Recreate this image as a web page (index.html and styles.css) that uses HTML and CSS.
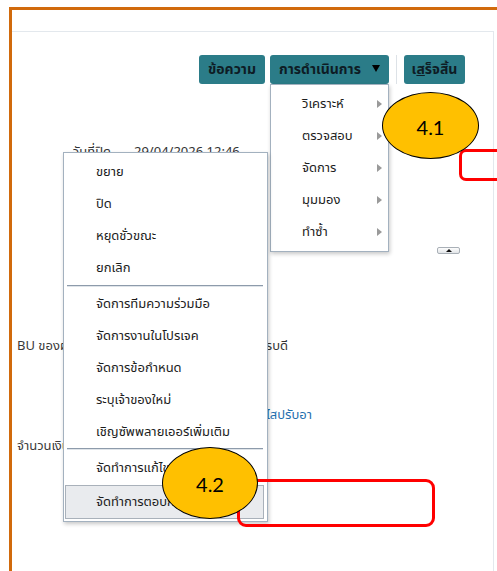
FILE: index.html
```html
<!DOCTYPE html>
<html lang="th">
<head>
<meta charset="utf-8">
<title>การดำเนินการ</title>
<link rel="stylesheet" href="styles.css">
</head>
<body>
<div class="frame">
  <div class="panel">
    <div class="toolbar">
      <button class="btn btn-msg">ข้อความ</button>
      <button class="btn btn-actions">การดำเนินการ <span class="caret"></span></button>
      <span class="tb-sep"></span>
      <button class="btn btn-done">เ<u>ส</u>ร็จสิ้น</button>
    </div>
    <div class="form">
      <div class="row row-close"><span class="label">วันที่ปิด</span><span class="value">29/04/2026 12:46</span></div>
      <div class="row-tools"><span class="mini-btn"><span class="mini-up"></span></span></div>
      <div class="row row-bu"><span class="label">BU ของผู้ร้องขอซื้อ</span><span class="value value-bu">บริษัท ครบดี</span></div>
      <div class="row row-link"><span class="label"></span><a class="value value-link">ไสปรับอา</a></div>
      <div class="row row-amount"><span class="label">จำนวนเงินรวมทั้งหมด</span></div>
    </div>
  </div>
</div>

<div class="menu menu-actions">
  <div class="mi">วิเคราะห์<span class="sub-arrow"></span></div>
  <div class="mi">ตรวจสอบ<span class="sub-arrow"></span></div>
  <div class="mi">จัดการ<span class="sub-arrow"></span></div>
  <div class="mi">มุมมอง<span class="sub-arrow"></span></div>
  <div class="mi">ทำซ้ำ<span class="sub-arrow"></span></div>
</div>

<div class="menu menu-sub">
  <div class="mi">ขยาย</div>
  <div class="mi">ปิด</div>
  <div class="mi">หยุดชั่วขณะ</div>
  <div class="mi">ยกเลิก</div>
  <div class="msep"></div>
  <div class="mi">จัดการทีมความร่วมมือ</div>
  <div class="mi">จัดการงานในโปรเจค</div>
  <div class="mi">จัดการข้อกำหนด</div>
  <div class="mi">ระบุเจ้าของใหม่</div>
  <div class="mi">เชิญซัพพลายเออร์เพิ่มเติม</div>
  <div class="msep msep-2"></div>
  <div class="mi mi-edit">จัดทำการแก้ไข</div>
  <div class="mi mi-hl">จัดทำการตอบกลับ</div>
</div>

<div class="redbox redbox-41"></div>
<div class="redbox redbox-42"></div>
<div class="callout callout-41">4.1</div>
<div class="callout callout-42">4.2</div>
</body>
</html>
```

FILE: styles.css
```css
html, body {
  margin: 0;
  padding: 0;
  background: #ffffff;
  overflow: hidden;
  height: 571px;
}

body {
  font-family: Tahoma, "Noto Sans Thai", Loma, Garuda, "Liberation Sans", sans-serif;
  font-size: 13px;
  color: #333333;
  position: relative;
}

.frame {
  margin: 7px 0 0 9px;
  border-top: 3px solid #d16a0c;
  border-left: 3px solid #d16a0c;
  height: 561px;
}

.panel {
  margin: 21px 3px 0 0;
  border-top: 1px solid #e3e8ed;
  border-right: 1px solid #e3e8ed;
  height: 539px;
}

.toolbar {
  display: flex;
  justify-content: flex-end;
  align-items: center;
  padding: 23px 28px 0 0;
}

.btn {
  height: 29px;
  border: none;
  border-radius: 3px;
  background: #2b7c88;
  color: #0e1c25;
  font-family: inherit;
  font-size: 14px;
  font-weight: bold;
  padding: 0;
  display: flex;
  align-items: center;
  justify-content: center;
}

.btn-msg { width: 66px; margin-right: 5px; }
.btn-actions { width: 119px; gap: 11px; }
.btn-done { width: 61px; }

.caret {
  width: 0;
  height: 0;
  border-left: 4.5px solid transparent;
  border-right: 4.5px solid transparent;
  border-top: 7px solid #000000;
  margin-top: -2px;
}

.tb-sep {
  width: 1px;
  height: 29px;
  background: #dde2e7;
  margin: 0 7px;
}

.form {
  padding-left: 5px;
}

.row {
  display: flex;
  gap: 16px;
  line-height: 20px;
  white-space: nowrap;
}

.label {
  width: 101px;
  flex: none;
  text-align: right;
}

.row-close .label { width: 94px; }
.row-close { gap: 23px; }

.value { flex: none; }

.row-close { margin-top: 58px; }
.row-bu { margin-top: 82px; }
.row-link { margin-top: 49px; }
.row-amount { margin-top: 11px; }

.row-bu .label, .row-amount .label { color: #3a3a3a; }

.value-bu {
  width: 154px;
  text-align: right;
}

.value-link {
  width: 178px;
  text-align: right;
  color: #1f6fae;
}

.row-tools {
  margin-top: 85px;
  display: flex;
  justify-content: flex-end;
  padding-right: 33px;
}

.mini-btn {
  width: 23px;
  height: 7px;
  box-sizing: border-box;
  border: 1px solid #a9b0b7;
  border-radius: 2px;
  background: linear-gradient(#fdfdfd, #e2e5e8);
  display: flex;
  justify-content: center;
  align-items: center;
}

.mini-up {
  width: 0;
  height: 0;
  border-left: 3px solid transparent;
  border-right: 3px solid transparent;
  border-bottom: 3px solid #111111;
}

/* menus */
.menu {
  position: absolute;
  box-sizing: border-box;
  background: #ffffff;
  border: 1px solid #a3b1bf;
  box-shadow: 1px 2px 4px rgba(0, 0, 0, 0.22);
  color: #1c1c1c;
  font-size: 13px;
  white-space: nowrap;
}

.mi {
  height: 32px;
  display: flex;
  align-items: center;
}

.menu-actions {
  left: 270px;
  top: 84px;
  width: 119px;
  height: 168px;
  padding: 3px 0;
  z-index: 2;
}

.menu-actions .mi {
  padding-left: 31px;
  padding-right: 6px;
  justify-content: space-between;
}

.sub-arrow {
  width: 0;
  height: 0;
  border-top: 4px solid transparent;
  border-bottom: 4px solid transparent;
  border-left: 5px solid #9a9a9a;
}

.menu-sub {
  left: 63px;
  top: 152px;
  width: 205px;
  height: 370px;
  padding: 3px 0 2px;
  z-index: 2;
}

.menu-sub .mi {
  padding-left: 32px;
}

.msep {
  height: 0;
  margin: 1px 4px 1px 3px;
  border-top: 1px solid #8d9bab;
  border-bottom: 1px solid #dfe4e9;
}

.msep-2 {
  margin-top: 0;
  margin-bottom: 1px;
}

.menu-sub .mi-edit {
  height: 33px;
  margin-bottom: 1px;
}

.menu-sub .mi-hl {
  height: 34px;
  box-sizing: border-box;
  margin: 0 3px 0 1px;
  padding-left: 30px;
  background: #e9ebee;
  border: 1px solid #a9b1ba;
}

/* annotations */
.redbox {
  position: absolute;
  box-sizing: border-box;
  border: 3px solid #ff0000;
  z-index: 3;
}

.redbox-41 {
  left: 459px;
  top: 149px;
  width: 60px;
  height: 32px;
  border-radius: 7px;
}

.redbox-42 {
  left: 237px;
  top: 479px;
  width: 198px;
  height: 48px;
  border-radius: 9px;
}

.callout {
  position: absolute;
  box-sizing: border-box;
  border: 1.5px solid #000000;
  border-radius: 50%;
  background: #ffc000;
  color: #000000;
  font-family: Lato, "Liberation Sans", sans-serif;
  font-size: 20px;
  display: flex;
  align-items: center;
  justify-content: center;
  padding-top: 2px;
  z-index: 4;
}

.callout-41 {
  left: 382px;
  top: 92px;
  width: 97px;
  height: 67px;
}

.callout-42 {
  left: 162px;
  top: 447px;
  width: 96px;
  height: 72px;
}
```
